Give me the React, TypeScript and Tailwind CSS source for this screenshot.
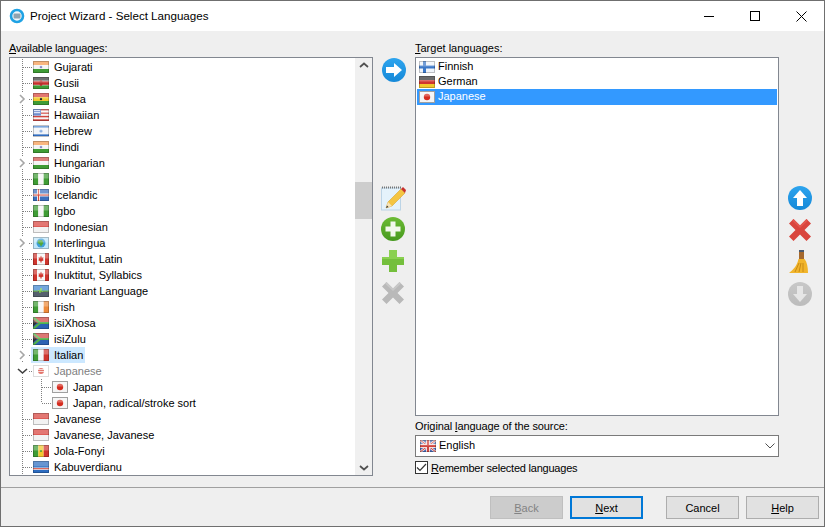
import { ReactNode } from "react";

type FlagKind =
  | "in" | "ke" | "gh" | "us" | "il" | "hu" | "ng" | "is" | "id" | "globe" | "ca"
  | "inv" | "ie" | "za" | "it" | "jp" | "sn" | "cv" | "fi" | "de" | "gb";

function bars(colors: string[]) {
  const h = 12 / colors.length;
  return colors.map((c, i) => <rect key={i} x="0" y={i * h} width="16" height={h} fill={c} />);
}

function cols(colors: string[]) {
  const w = 16 / colors.length;
  return colors.map((c, i) => <rect key={i} x={i * w} y="0" width={w} height="12" fill={c} />);
}

function FlagArt({ kind }: { kind: FlagKind }) {
  switch (kind) {
    case "in":
      return <>{bars(["#f59a4e", "#f4f4f4", "#3f9c35"])}<circle cx="8" cy="6" r="1.3" fill="#8a8ac8" /></>;
    case "ke":
      return <>{bars(["#3a3a3a", "#c8302c", "#3f9c35"])}<rect y="3.6" width="16" height=".6" fill="#ddd" /><rect y="7.8" width="16" height=".6" fill="#ddd" /><ellipse cx="8" cy="6" rx="1.5" ry="3" fill="#b5302c" /></>;
    case "gh":
      return <>{bars(["#d8433a", "#f2c82e", "#3f9c35"])}<circle cx="8" cy="6" r="1.2" fill="#222" /></>;
    case "us":
      return (
        <>
          {bars(["#d0453f", "#f5f5f5", "#d0453f", "#f5f5f5", "#d0453f", "#f5f5f5", "#d0453f"])}
          <rect width="8" height="6.5" fill="#5a7cc8" />
          <rect x="1" y="1" width="6" height="1" fill="#d5def5" />
          <rect x="1" y="3" width="6" height="1" fill="#d5def5" />
        </>
      );
    case "il":
      return <><rect width="16" height="12" fill="#f2f4f8" /><rect y="1" width="16" height="1.6" fill="#4a86d0" /><rect y="9.4" width="16" height="1.6" fill="#2f6cc0" /><circle cx="8" cy="6" r="1.6" fill="#8db0e0" /></>;
    case "hu":
      return bars(["#d0504a", "#f4f4f4", "#3f9c35"]);
    case "ng":
      return cols(["#3f9c35", "#f6f6f6", "#3f9c35"]);
    case "is":
      return <><rect width="16" height="12" fill="#3c70bf" /><rect x="4" width="3" height="12" fill="#f0e8e8" /><rect y="4.5" width="16" height="3" fill="#f0e8e8" /><rect x="5" width="1" height="12" fill="#d8483a" /><rect y="5.5" width="16" height="1" fill="#d8483a" /></>;
    case "id":
      return bars(["#d9433d", "#f2f2f2"]);
    case "globe":
      return <><rect width="16" height="12" fill="#bfe6fb" /><circle cx="8" cy="6" r="4.5" fill="#3d9fd8" /><path d="M5 3.5 L9 3 L10.5 6 L8 9.5 L6.5 7 L4.5 6 Z" fill="#52a83a" /></>;
    case "ca":
      return <>{cols(["#d0352e", "#f6f6f6", "#f6f6f6", "#d0352e"])}<path d="M8 2.5 L9 4.5 L10.5 4.2 L10 6.5 L11 7 L8.4 8.6 V9.8 H7.6 V8.6 L5 7 L6 6.5 L5.5 4.2 L7 4.5 Z" fill="#d0352e" /></>;
    case "inv":
      return <><rect width="16" height="6" fill="#3f86d0" /><rect y="6" width="16" height="6" fill="#55606e" /><path d="M0 6 H5 L6 5 L7 8 L8 3 L9 7 L10 6 H16" stroke="#7ccf45" strokeWidth="1" fill="none" /></>;
    case "ie":
      return cols(["#3f9c35", "#f6f6f6", "#ee8a3a"]);
    case "za":
      return <><rect width="16" height="6" fill="#d0453f" /><rect y="6" width="16" height="6" fill="#2c62b4" /><path d="M0 0 L7 6 L0 12 M7 6 H16" stroke="#52b04a" strokeWidth="2.2" fill="none" /><path d="M0 2.5 L4 6 L0 9.5 Z" fill="#333" /></>;
    case "it":
      return cols(["#3f9c35", "#f6f6f6", "#d0352e"]);
    case "jp":
      return <><rect width="16" height="12" fill="#f4f4f4" /><circle cx="8" cy="6" r="3.2" fill="#d52b1e" /></>;
    case "sn":
      return <>{cols(["#3f9c35", "#f2c82e", "#d0352e"])}<circle cx="8" cy="6" r="1" fill="#3f9c35" /></>;
    case "cv":
      return <><rect width="16" height="12" fill="#2c6cc0" /><rect y="6.5" width="16" height="2.4" fill="#f4f4f4" /><rect y="7.2" width="16" height="1" fill="#d8483a" /></>;
    case "fi":
      return <><rect width="16" height="12" fill="#f0f4fa" /><rect x="4" width="3" height="12" fill="#3c78c8" /><rect y="4.5" width="16" height="3" fill="#3c78c8" /></>;
    case "de":
      return bars(["#333333", "#d0352e", "#f2c82e"]);
    case "gb":
      return (
        <>
          <rect width="16" height="12" fill="#4a6cb8" />
          <path d="M0 0 L16 12 M16 0 L0 12" stroke="#f2e0e0" strokeWidth="2.4" />
          <path d="M0 0 L16 12 M16 0 L0 12" stroke="#d0453f" strokeWidth="1" />
          <rect x="6" width="4" height="12" fill="#f2e0e0" />
          <rect y="4" width="16" height="4" fill="#f2e0e0" />
          <rect x="7" width="2" height="12" fill="#d0453f" />
          <rect y="5" width="16" height="2" fill="#d0453f" />
        </>
      );
  }
}

function Flag({ kind, dim, framed }: { kind: FlagKind; dim?: boolean; framed?: boolean }) {
  if (dim) {
    // cut state of the tree item: washed out flag in a dotted frame
    return (
      <svg width="16" height="12" viewBox="0 0 16 12" className="block shrink-0">
        <rect x=".5" y=".5" width="15" height="11" fill="#fff" stroke="#b8b8b8" strokeDasharray="1 1" />
        <circle cx="8" cy="6" r="3" fill="#d52b1e" />
        <path d="M5 4.5 H11 M5 6.5 H11 M6 3 V9 M8 3 V9 M10 3 V9" stroke="#fff" strokeWidth=".7" />
      </svg>
    );
  }
  return (
    <svg width="16" height="12" viewBox="0 0 16 12" className="block shrink-0">
      <FlagArt kind={kind} />
      <rect width="16" height="5.5" fill="#fff" opacity=".28" />
      <rect x=".5" y=".5" width="15" height="11" fill="none" stroke={framed ? "#a0a0a0" : "#000"} strokeOpacity={framed ? 1 : 0.22} />
    </svg>
  );
}

type TreeRow = {
  label: string;
  flag: FlagKind;
  expander?: "closed" | "open";
  selected?: boolean;
  dim?: boolean;
  child?: "mid" | "last";
};

const rows: TreeRow[] = [
  { label: "Gujarati", flag: "in" },
  { label: "Gusii", flag: "ke" },
  { label: "Hausa", flag: "gh", expander: "closed" },
  { label: "Hawaiian", flag: "us" },
  { label: "Hebrew", flag: "il" },
  { label: "Hindi", flag: "in" },
  { label: "Hungarian", flag: "hu", expander: "closed" },
  { label: "Ibibio", flag: "ng" },
  { label: "Icelandic", flag: "is" },
  { label: "Igbo", flag: "ng" },
  { label: "Indonesian", flag: "id" },
  { label: "Interlingua", flag: "globe", expander: "closed" },
  { label: "Inuktitut, Latin", flag: "ca" },
  { label: "Inuktitut, Syllabics", flag: "ca" },
  { label: "Invariant Language", flag: "inv" },
  { label: "Irish", flag: "ie" },
  { label: "isiXhosa", flag: "za" },
  { label: "isiZulu", flag: "za" },
  { label: "Italian", flag: "it", expander: "closed", selected: true },
  { label: "Japanese", flag: "jp", expander: "open", dim: true },
  { label: "Japan", flag: "jp", child: "mid" },
  { label: "Japan, radical/stroke sort", flag: "jp", child: "last" },
  { label: "Javanese", flag: "id" },
  { label: "Javanese, Javanese", flag: "id" },
  { label: "Jola-Fonyi", flag: "sn" },
  { label: "Kabuverdianu", flag: "cv" },
];

// guide lines and expander of one tree row, 12 is the gutter x of the guide
function Guides({ row }: { row: TreeRow }) {
  const width = row.child ? 42 : 23;
  return (
    <svg width={width} height="16" viewBox={`0 0 ${width} 16`} className="block shrink-0" shapeRendering="crispEdges">
      <path d="M12.5 0 V16" stroke="#808080" strokeDasharray="1 1" />
      {!row.child && <path d="M13 8.5 H23" stroke="#808080" strokeDasharray="1 1" />}
      {row.child && <path d={row.child === "last" ? "M31.5 0 V8" : "M31.5 0 V16"} stroke="#808080" strokeDasharray="1 1" />}
      {row.child && <path d="M32 8.5 H42" stroke="#808080" strokeDasharray="1 1" />}
      {row.expander === "closed" && (
        <>
          <rect x="8" y="2" width="10" height="12" fill="#fff" />
          <path d="M10 4 L14 8 L10 12" stroke="#a6a6a6" strokeWidth="1.6" fill="none" shapeRendering="auto" />
        </>
      )}
      {row.expander === "open" && (
        <>
          <rect x="7" y="0" width="12" height="14" fill="#fff" />
          <path d="M8 6 L12.5 10 L17 6" stroke="#404040" strokeWidth="1.6" fill="none" shapeRendering="auto" />
        </>
      )}
    </svg>
  );
}

function LanguageTree() {
  return (
    <div className="flex-1 overflow-hidden pt-px">
      {rows.map((row) => (
        <div key={row.label} className="flex h-4 items-center">
          <Guides row={row} />
          <div className={`flex h-4 items-center ${row.selected ? "-ml-[2px] bg-[#cce8ff] pl-[2px]" : ""}`}>
            <div className="flex h-4 w-[21px] items-center">
              <Flag kind={row.flag} dim={row.dim} framed={!!row.child} />
            </div>
            <span className={`pr-[2px] leading-4 ${row.dim ? "text-[#808080]" : "text-black"}`}>{row.label}</span>
          </div>
        </div>
      ))}
    </div>
  );
}

function Scrollbar() {
  return (
    <div className="flex w-[17px] shrink-0 flex-col items-center bg-[#f0f0f0] py-[4px]">
      <svg width="10" height="6" viewBox="0 0 10 6" className="block"><path d="M1 5 L5 1.5 L9 5" stroke="#505050" strokeWidth="1.7" fill="none" /></svg>
      <div className="mt-[114px] h-[37px] w-full bg-[#cdcdcd]" />
      <svg width="10" height="6" viewBox="0 0 10 6" className="mt-auto block"><path d="M1 1 L5 4.5 L9 1" stroke="#505050" strokeWidth="1.7" fill="none" /></svg>
    </div>
  );
}

function RoundIcon({ from, to, children }: { from: string; to: string; children: ReactNode }) {
  const id = `g${from.slice(1)}`;
  return (
    <svg width="26" height="26" viewBox="0 0 26 26" className="block">
      <defs>
        <linearGradient id={id} x1="0" y1="0" x2="0" y2="1">
          <stop offset="0" stopColor={from} />
          <stop offset="1" stopColor={to} />
        </linearGradient>
      </defs>
      <circle cx="13" cy="13" r="12" fill={`url(#${id})`} />
      {children}
    </svg>
  );
}

const ArrowRight = () => (
  <RoundIcon from="#2da4ee" to="#1689d8">
    <path d="M5 10 H13 V6 L21 13 L13 20 V16 H5 Z" fill="#fff" />
  </RoundIcon>
);
const ArrowUp = () => (
  <RoundIcon from="#2da4ee" to="#1689d8">
    <path d="M10 21 V13 H6 L13 5 L20 13 H16 V21 Z" fill="#fff" />
  </RoundIcon>
);
const ArrowDownGray = () => (
  <RoundIcon from="#c8c8c8" to="#bcbcbc">
    <path d="M10 5 V13 H6 L13 21 L20 13 H16 V5 Z" fill="#e6e6e6" />
  </RoundIcon>
);
const AddCircle = () => (
  <RoundIcon from="#6cbb34" to="#46991e">
    <path d="M10.5 5.5 H15.5 V10.5 H20.5 V15.5 H15.5 V20.5 H10.5 V15.5 H5.5 V10.5 H10.5 Z" fill="#f2f8ec" />
  </RoundIcon>
);

function Notepad() {
  return (
    <svg width="26" height="26" viewBox="0 0 26 26" className="block">
      <rect x="1.5" y="3" width="19" height="22" fill="#e4f2fb" stroke="#bcd4e6" />
      <path d="M2 2.5 H21" stroke="#777" strokeWidth="2" strokeDasharray="1 1" />
      <path d="M6 23 L8 17 L21 4 L25 8 L12 21 Z" fill="#f4c542" stroke="#d59a1e" strokeWidth=".5" />
      <path d="M21 4 L23 2 L26 5 L25 8 Z" fill="#c8302c" />
      <path d="M6 23 L8 17 L12 21 Z" fill="#f7e3b8" />
      <path d="M6 23 L7 20.5 L8.5 22 Z" fill="#333" />
    </svg>
  );
}

function Plus() {
  return (
    <svg width="26" height="26" viewBox="0 0 26 26" className="block">
      <path d="M9 2 H17 V9 H24 V17 H17 V24 H9 V17 H2 V9 H9 Z" fill="#74bf3c" />
      <path d="M9 2 H17 V9 H24 V11 H2 V9 H9 Z" fill="#8ad050" />
    </svg>
  );
}

function Cross({ color, light }: { color: string; light: string }) {
  return (
    <svg width="26" height="26" viewBox="0 0 26 26" className="block">
      <path d="M6.5 2 L13 8.5 L19.5 2 L24 6.5 L17.5 13 L24 19.5 L19.5 24 L13 17.5 L6.5 24 L2 19.5 L8.5 13 L2 6.5 Z" fill={color} />
      <path d="M6.5 2 L13 8.5 L19.5 2 L21 3.5 L13 11 L5 3.5 Z" fill={light} />
    </svg>
  );
}

function Broom() {
  return (
    <svg width="26" height="26" viewBox="0 0 26 26" className="block">
      <rect x="12" y="1" width="5" height="10" fill="#a5692e" />
      <rect x="12" y="1" width="5" height="2" fill="#4a5a70" />
      <path d="M11.5 10 H17.5 C20 13 21 18 21 24 H2 C6 21 10 17 11.5 10 Z" fill="#f1b52c" />
      <path d="M8 23 L12 14 M12 23 L14 14 M16 23 L16 14" stroke="#c98a14" strokeWidth="1" />
    </svg>
  );
}

function DialogButton({ children, primary, disabled }: { children: ReactNode; primary?: boolean; disabled?: boolean }) {
  const tone = disabled
    ? "border-[#bfbfbf] bg-[#cccccc] text-[#838383]"
    : primary
      ? "border-2 border-[#0078d7] bg-[#e1e1e1] text-black"
      : "border-[#adadad] bg-[#e1e1e1] text-black";
  return (
    <div className={`flex h-[23px] w-[73px] items-center justify-center border ${tone}`}>
      <span>{children}</span>
    </div>
  );
}

export default function App() {
  return (
    <div className="flex h-[527px] w-[825px] flex-col overflow-hidden border border-[#6f6f6f] bg-[#efefef] font-['Liberation_Sans',sans-serif] text-[11px] leading-4 text-black">
      {/* title bar */}
      <div className="flex h-[30px] shrink-0 items-center bg-white pl-[8px]">
        <svg width="16" height="16" viewBox="0 0 16 16" className="mr-[5px] block">
          <circle cx="8" cy="8" r="6" fill="#f2f7fb" stroke="#1fa2e4" strokeWidth="2.6" />
          <rect x="4.5" y="5.5" width="7" height="5" rx="1" fill="#8fa3b0" />
        </svg>
        <span className="text-[11.6px]">Project Wizard - Select Languages</span>
        <div className="ml-auto flex items-center">
          <div className="flex h-[30px] w-[46px] items-center justify-center">
            <svg width="10" height="10" viewBox="0 0 10 10" shapeRendering="crispEdges"><path d="M0 5.5 H10" stroke="#000" /></svg>
          </div>
          <div className="flex h-[30px] w-[46px] items-center justify-center">
            <svg width="10" height="10" viewBox="0 0 10 10" shapeRendering="crispEdges"><rect x=".5" y=".5" width="9" height="9" fill="none" stroke="#000" /></svg>
          </div>
          <div className="flex h-[30px] w-[46px] items-center justify-center">
            <svg width="11" height="11" viewBox="0 0 11 11"><path d="M.5 .5 L10.5 10.5 M10.5 .5 L.5 10.5" stroke="#000" /></svg>
          </div>
        </div>
      </div>

      {/* main area */}
      <div className="flex flex-1 pl-[8px] pt-[10px]">
        <div className="flex w-[364px] shrink-0 flex-col">
          <div className="h-4 leading-[14px] tracking-[-0.15px]"><u>A</u>vailable languages:</div>
          <div className="flex h-[419px] border border-[#828790] bg-white">
            <LanguageTree />
            <Scrollbar />
          </div>
        </div>

        <div className="flex w-[42px] shrink-0 flex-col items-center pt-[16px]">
          <ArrowRight />
          <div className="mr-[2px] mt-[102px] flex flex-col items-center gap-[6px]">
            <div className="-mb-px"><Notepad /></div>
            <AddCircle />
            <Plus />
            <Cross color="#b9b9b9" light="#c8c8c8" />
          </div>
        </div>

        <div className="flex w-[364px] shrink-0 flex-col">
          <div className="h-4 leading-[14px]"><u>T</u>arget languages:</div>
          <div className="h-[359px] border border-[#828790] bg-white p-px">
            <div className="flex h-[15px] items-center pl-[2px]"><span className="mr-[3px]"><Flag kind="fi" /></span><span className="pb-[2px]">Finnish</span></div>
            <div className="flex h-[15px] items-center pl-[2px]"><span className="mr-[3px]"><Flag kind="de" /></span><span className="pb-[2px]">German</span></div>
            <div className="flex h-4 items-center bg-[#3399ff] pl-[2px] text-white"><span className="mr-[3px]"><Flag kind="jp" framed /></span><span className="pb-[2px]">Japanese</span></div>
          </div>
          <div className="mt-[2px] h-4 tracking-[-0.1px]">Original <u>l</u>anguage of the source:</div>
          <div className="mt-px flex h-[22px] items-center border border-[#7a7a7a] bg-white pl-[4px]">
            <span className="mr-[3px]"><Flag kind="gb" /></span>
            <span className="pb-[2px]">English</span>
            <svg width="10" height="6" viewBox="0 0 10 6" className="ml-auto mr-[3px]"><path d="M.5 .5 L5 5 L9.5 .5" stroke="#505050" fill="none" /></svg>
          </div>
          <div className="mt-[4px] flex h-[13px] items-center">
            <div className="mr-[3px] flex h-[13px] w-[13px] items-center justify-center border border-[#333] bg-white">
              <svg width="11" height="9" viewBox="0 0 11 9"><path d="M1 4.5 L4 7.5 L10 1" stroke="#333" strokeWidth="1.2" fill="none" /></svg>
            </div>
            <span className="tracking-[-0.22px]"><u>R</u>emember selected languages</span>
          </div>
        </div>

        <div className="flex w-[42px] shrink-0 flex-col items-center pt-[144px]">
          <div className="flex flex-col items-center gap-[6px]">
            <ArrowUp />
            <Cross color="#d9453d" light="#e4574e" />
            <Broom />
            <ArrowDownGray />
          </div>
        </div>
      </div>

      {/* footer */}
      <div className="flex h-[39px] shrink-0 items-start border-t border-[#a0a0a0] pl-[489px] pt-[8px]">
        <DialogButton disabled><u>B</u>ack</DialogButton>
        <div className="ml-[7px]"><DialogButton primary><u>N</u>ext</DialogButton></div>
        <div className="ml-[23px]"><DialogButton>Cancel</DialogButton></div>
        <div className="ml-[7px]"><DialogButton><u>H</u>elp</DialogButton></div>
      </div>
    </div>
  );
}
